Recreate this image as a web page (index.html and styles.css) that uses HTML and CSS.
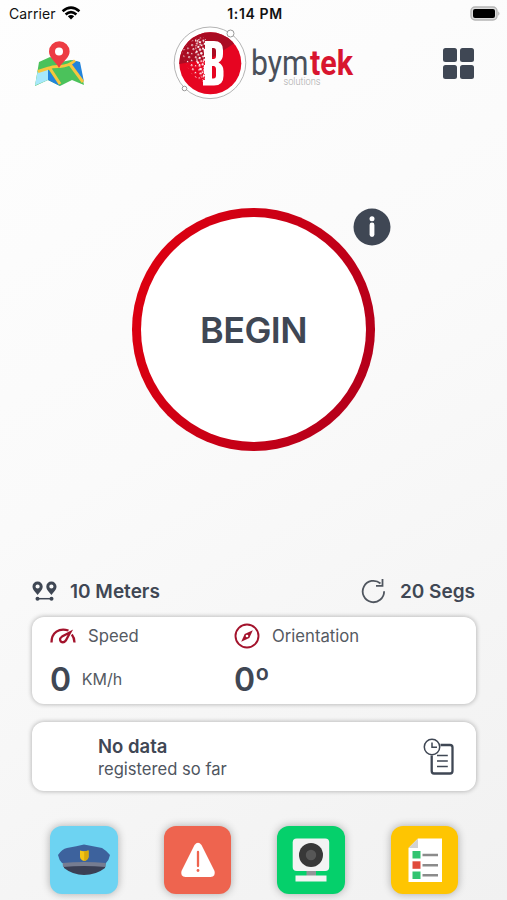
FILE: index.html
```
<!DOCTYPE html>
<html>
	<head>
		<meta charset="UTF-8">
		<title>bymtek</title>
		<link rel="stylesheet" href="styles.css">
	</head>
	<body>
		<div id="app">
			<div class="status">
				<div class="carrier">
					<span>Carrier</span>
					<svg width="20" height="14" viewBox="0 0 20 14">
						<g fill="none" stroke="#000" stroke-width="2.6">
							<path d="M1.6 5.2Q10 -2 18.4 5.2"/>
							<path d="M4.6 8.5Q10 3.8 15.4 8.5"/>
						</g>
						<path d="M6.8 10.3Q10 7.8 13.2 10.3L10 13.6Z"/>
					</svg>
				</div>
				<span class="time">1:14 PM</span>
				<svg class="battery" width="31" height="15" viewBox="0 0 31 15">
					<rect x="1" y="1" width="26" height="13" rx="4" fill="#ddd" stroke="#b5b5b5" stroke-width="1.4"/>
					<rect x="3" y="3" width="22" height="9" rx="2"/>
					<path d="M28.3 5.2Q30.6 7.5 28.3 9.8Z" fill="#aaa"/>
				</svg>
			</div>
			<div class="header">
				<svg class="map" width="49" height="46" viewBox="0 0 49 46">
					<path d="M4 21L15 16L26 21L36 19L44 21L49 44L37 39L25 45L13 39L0 45Z" fill="#4bc25b"/>
					<path d="M2.500 31L13 28V39L0 44.500Z" fill="#a7e8fb"/>
					<path d="M13 28L25 45L13 39Z" fill="#2384dc"/>
					<path d="M37 19L45 21L49 41L36 25Z" fill="#2384dc"/>
					<path d="M3 30.500L14 27Q18 25 25 25.500Q34 25 40 19.500M14 26L25 43M34 22L48 41" fill="none" stroke="#f7c63e" stroke-width="3"/>
					<path d="M24 27C20 20 14 17 14 10.500A10.300 10.300 0 0 1 34.600 10.500C34.600 17 28 20 24 27Z" fill="#ed3c43"/>
					<circle cx="24" cy="10.500" r="4" fill="#fff"/>
				</svg>
				<svg class="logo" width="190" height="76" viewBox="0 0 190 76">
					<defs>
						<clipPath id="disc"><circle cx="37.300" cy="37.300" r="31"/></clipPath>
						<pattern id="dots" width="9" height="9" patternUnits="userSpaceOnUse" patternTransform="rotate(28)">
							<rect x="1" y="1" width="1.600" height="1.600" fill="#fff"/>
							<rect x="5" y="3" width="1.300" height="1.300" fill="#fff"/>
							<rect x="2" y="6" width="1.200" height="1.200" fill="#fff"/>
							<rect x="7" y="7" width="1.600" height="1.600" fill="#fff"/>
						</pattern>
						<pattern id="bits" width="5" height="5" patternUnits="userSpaceOnUse" patternTransform="rotate(20)">
							<rect width="1.900" height="1.900" fill="#fff"/>
							<rect x="2.700" y="2.500" width="1.700" height="1.700" fill="#fff"/>
						</pattern>
					</defs>
					<circle cx="37" cy="36.800" r="35.800" fill="#fff" stroke="#b4b4b4"/>
					<g clip-path="url(#disc)">
						<rect width="76" height="76" fill="#e60521"/>
						<path d="M0 0H68V13L51 24L37 33L0 39Z" fill="#aa0c23"/>
						<path d="M9 26Q16 12 31 11V56Q16 52 9 26Z" fill="url(#dots)"/>
						<path d="M22 13H33V57Q23 52 22 13Z" fill="url(#bits)"/>
					</g>
					<path d="M32 15H41Q50 15 50 24V28Q50 34 45.500 36.500Q50.500 39 50.500 45V50Q50.500 59.500 41 59.500H30V54H32V48H31V39H32V31H31V23H32ZM39 22V33H40.500Q43 33 43 30V25Q43 22 40.500 22ZM39 40V52.500H40.500Q43 52.500 43 49.500V43.500Q43 40 40.500 40Z" fill="#fff" fill-rule="evenodd"/>
					<circle cx="57.500" cy="7.500" r="3.500" fill="#fff" stroke="#999"/>
					<circle cx="11.500" cy="62.500" r="2.300" fill="#fff" stroke="#999"/>
					<text class="bym" x="78" y="49" textLength="57.500" lengthAdjust="spacingAndGlyphs">bym</text>
					<text class="tek" x="137" y="49" textLength="43" lengthAdjust="spacingAndGlyphs">tek</text>
					<text class="sol" x="110.500" y="59" textLength="37" lengthAdjust="spacingAndGlyphs">solutions</text>
				</svg>
				<div class="menu"><i></i><i></i><i></i><i></i></div>
			</div>
			<div class="main">
				<div class="begin">
					<span>BEGIN</span>
					<svg class="info" width="38" height="38" viewBox="0 0 38 38">
						<circle cx="19" cy="19" r="18.500" fill="#3f4754"/>
						<circle cx="19" cy="10.800" r="2.500" fill="#fff"/>
						<path d="M19 17V26.500" stroke="#fff" stroke-width="4.800" stroke-linecap="round"/>
					</svg>
				</div>
			</div>
			<div class="limits">
				<svg width="26" height="21" viewBox="0 0 26 21">
					<g fill="#3f4754" fill-rule="evenodd">
						<path d="M5.500 .5A5 5 0 0 1 10.700 5.500C10.700 9 7.500 11 5.700 14C3.700 11 .5 9 .5 5.500A5 5 0 0 1 5.500 .5ZM5.600 3.400A2.100 2.100 0 1 0 5.600 7.600A2.100 2.100 0 0 0 5.600 3.400Z"/>
						<path d="M19.300 .5A5 5 0 0 1 24.500 5.500C24.500 9 21.300 11 19.500 14C17.500 11 14.300 9 14.300 5.500A5 5 0 0 1 19.300 .5ZM19.400 3.400A2.100 2.100 0 1 0 19.400 7.600A2.100 2.100 0 0 0 19.400 3.400Z"/>
						<circle cx="5.500" cy="17.700" r="2"/>
						<circle cx="19.500" cy="17.700" r="2"/>
					</g>
					<path d="M5 17.700H20" stroke="#3f4754" stroke-width="1.500"/>
				</svg>
				<span class="meters">10 Meters</span>
				<svg width="25" height="26" viewBox="0 0 25 26" fill="none" stroke="#50565f" stroke-width="1.800">
					<path d="M19.500 5.500A10.700 10.700 0 1 0 23.100 13.300"/>
					<path d="M21.500 1V7.800H15"/>
				</svg>
				<span class="segs">20 Segs</span>
			</div>
			<div class="card data">
				<div class="item">
					<div class="label">
						<svg width="26" height="26" viewBox="0 0 26 26" fill="none" stroke="#a3132c" stroke-width="2.300">
							<path d="M1.500 19.500C1.500 9.500 9 4.500 18.500 7.500M21.800 11.500Q24.300 14.500 24.500 19.500"/>
							<path d="M20.300 9.300L15.800 17.500Q13.500 20.500 10.800 18.500Q8.800 15.700 12 13.600Z"/>
						</svg>
						<span>Speed</span>
					</div>
					<div class="value"><b>0</b><span>KM/h</span></div>
				</div>
				<div class="item">
					<div class="label">
						<svg width="26" height="26" viewBox="0 0 26 26">
							<circle cx="13" cy="13" r="11.500" fill="none" stroke="#a3132c" stroke-width="1.900"/>
							<path d="M18.800 7.200L15.300 15L7.200 18.800L10.700 11Z" fill="#a3132c"/>
							<circle cx="13" cy="13" r="1.300" fill="#fff"/>
						</svg>
						<span>Orientation</span>
					</div>
					<div class="value"><b>0º</b></div>
				</div>
			</div>
			<div class="card record">
				<div>
					<p class="title">No data</p>
					<p class="text">registered so far</p>
				</div>
				<svg width="32" height="38" viewBox="0 0 32 38" fill="none" stroke="#3f4754">
					<path d="M8.700 17.500V33Q8.700 35.500 11 35.500H27Q29.500 35.500 29.500 33V9.500Q29.500 7 27 7H17.500" stroke-width="2.300"/>
					<circle cx="9" cy="9" r="7.700" stroke-width="1.500"/>
					<path d="M9 4.500V9.300H14" stroke-width="1.500"/>
					<path d="M14 17.500H24.800M14 23H24.800M14 28.500H24.800" stroke-width="1.500"/>
				</svg>
			</div>
			<div class="tiles">
				<div class="tile police">
					<svg width="68" height="68" viewBox="0 0 68 68">
						<path d="M13 34L14 42Q23 49 34 49Q46 49 55 42L56 34Z" fill="#3a3f55"/>
						<path d="M12.500 36H55.500V41Q34 39 13 41Z" fill="#767c91"/>
						<path d="M8 29Q12 23 17 22Q27 20 34 18.500Q43 20 52 22Q57 25 60 29Q59 34 56 37Q34 35 12 37Q9 34 8 29Z" fill="#3d629d"/>
						<path d="M30 24.500Q34 26 38.500 24.500V31Q38 34 34.200 35Q30.500 34 30 31Z" fill="#f4c515"/>
						<path d="M34.200 25.300Q36.500 25.300 38.500 24.500V31Q38 34 34.200 35Z" fill="#d9a90d"/>
					</svg>
				</div>
				<div class="tile alert">
					<svg width="68" height="68" viewBox="0 0 68 68">
						<path d="M30.500 19Q34 14.500 37.500 19L50.500 45Q52 50.500 46.500 51H21.500Q16 50.500 17.500 45Z" fill="#fff"/>
						<path d="M34 26V40" stroke="#ee644f" stroke-width="2.300" stroke-linecap="round"/>
						<circle cx="34" cy="44.500" r="1.400" fill="#ee644f"/>
					</svg>
				</div>
				<div class="tile camera">
					<svg width="68" height="68" viewBox="0 0 68 68">
						<rect x="29.500" y="44" width="9.500" height="6" fill="#939598"/>
						<rect x="15.700" y="12.500" width="36.500" height="32.500" rx="4" fill="#f3f3f3"/>
						<circle cx="34" cy="29" r="12" fill="#383838"/>
						<circle cx="34" cy="29" r="5.200" fill="#575757"/>
						<rect x="18.500" y="49.500" width="31" height="6" fill="#f3f3f3"/>
					</svg>
				</div>
				<div class="tile list">
					<svg width="68" height="68" viewBox="0 0 68 68">
						<path d="M27 12.500H51V56H17.500V22Z" fill="#fff"/>
						<path d="M27 12.500V22H17.500Z" fill="#d2d2d2"/>
						<path d="M21.500 25H29.500V32.500H21.500ZM21.500 45.500H29.500V53H21.500Z" fill="#31c471"/>
						<path d="M21.500 35.300H29.500V42.800H21.500Z" fill="#e04a3c"/>
						<path d="M31.500 29H47M31.500 39.200H47M31.500 49.300H47" stroke="#8b8b8b" stroke-width="2.400"/>
					</svg>
				</div>
			</div>
		</div>
	</body>
</html>
```
FILE: styles.css
```
*{
	box-sizing: border-box;
}
body{
	margin: 0;
	font-family: Inter, "Liberation Sans", sans-serif;
	color: #3f4754;
}
#app{
	width: 507px;
	height: 900px;
	overflow: hidden;
	background: linear-gradient(150deg, #fefefe 0%, #fafafa 45%, #f1f1f1 100%);
}
svg{
	display: block;
	flex: none;
}
.status{
	height: 26px;
	padding: 0 6px 0 9px;
	display: grid;
	grid-template-columns: 1fr auto 1fr;
	align-items: center;
	font-size: 14px;
	color: #111;
}
.carrier{
	display: flex;
	align-items: center;
	gap: 5px;
	letter-spacing: .1px;
}
.time{
	font-weight: 600;
	letter-spacing: .6px;
}
.battery{
	justify-self: end;
}
.header{
	height: 80px;
	padding: 0 33.5px 0 35px;
	display: flex;
	align-items: flex-start;
}
.map{
	margin-top: 15px;
}
.logo{
	margin: 0 0 0 89px;
}
.bym{
	font-family: Roboto, sans-serif;
	font-size: 35px;
	font-weight: 400;
	fill: #4a505b;
}
.tek{
	font-family: Roboto, sans-serif;
	font-size: 35px;
	font-weight: 700;
	fill: #d8152f;
}
.sol{
	font-family: Roboto, sans-serif;
	font-size: 11px;
	font-weight: 300;
	fill: #aaa;
}
.menu{
	margin: 22px 0 0 auto;
	display: grid;
	grid-template-columns: 14px 14px;
	gap: 3px;
}
.menu i{
	height: 14px;
	border-radius: 2.5px;
	background: #3f4754;
}
.main{
	height: 470px;
	padding-top: 102px;
}
.begin{
	position: relative;
	width: 243px;
	height: 243px;
	margin: 0 auto;
	border: 9px solid transparent;
	border-radius: 50%;
	background: linear-gradient(#fff, #fff) padding-box, linear-gradient(110deg, #e2000f, #b0001c) border-box;
	display: flex;
	align-items: center;
	justify-content: center;
	font-size: 36px;
	font-weight: 600;
	letter-spacing: -.6px;
}
.info{
	position: absolute;
	top: -9px;
	right: -25px;
}
.limits{
	height: 30px;
	padding: 0 32px;
	display: flex;
	align-items: center;
	font-size: 19px;
	font-weight: 600;
}
.meters{
	margin: 0 auto 0 12px;
}
.segs{
	margin-left: 14px;
}
.card{
	margin: 0 31px 0 32px;
	border-radius: 12px;
	background: #fff;
	box-shadow: 0 0 5px rgba(0,0,0,.32);
}
.data{
	height: 87px;
	margin-top: 11px;
	padding: 6px 18px 0;
	display: grid;
	grid-template-columns: 184px 1fr;
}
.label{
	display: flex;
	align-items: center;
	gap: 12px;
	font-size: 16.7px;
	color: #555a62;
}
.value{
	display: flex;
	align-items: center;
	margin-top: 10px;
	height: 40px;
	gap: 11px;
	font-size: 16px;
	color: #555a62;
}
.value b{
	font-size: 32px;
	font-weight: 600;
	letter-spacing: -.3px;
	color: #3f4754;
}
.record{
	height: 69px;
	margin-top: 18px;
	padding: 0 21px 0 66px;
	display: flex;
	align-items: center;
	justify-content: space-between;
}
.record p{
	margin: 0;
	line-height: 22px;
}
.record .title{
	font-size: 18.5px;
	font-weight: 600;
	line-height: 24px;
}
.text{
	font-size: 16.6px;
	color: #50565f;
}
.tiles{
	margin-top: 35px;
	padding: 0 49px 0 50px;
	display: flex;
	justify-content: space-between;
}
.tile{
	width: 67.5px;
	height: 67.5px;
	border-radius: 12px;
	box-shadow: 0 0 9px rgba(0,0,0,.3);
}
.police{
	background: #6dd3f2;
}
.alert{
	background: #ee644f;
}
.camera{
	background: #05d06b;
}
.list{
	background: #fec502;
}
```
